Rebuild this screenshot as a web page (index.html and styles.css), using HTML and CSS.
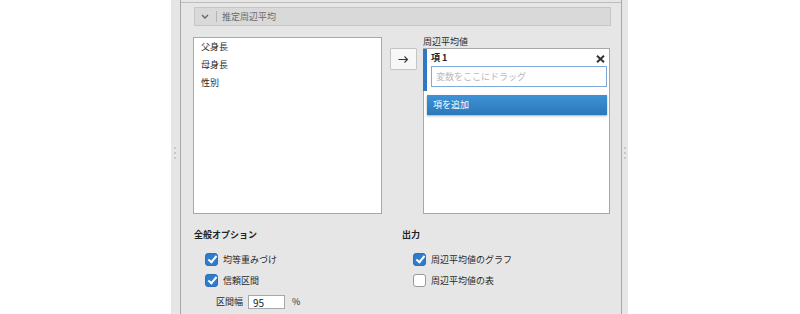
FILE: index.html
```html
<!DOCTYPE html>
<html lang="ja">

<head>
    <meta charset="UTF-8">
    <title>推定周辺平均</title>
    <link rel="stylesheet" href="styles.css">
</head>

<body>
    <div class="stage">
        <div class="grip grip-left"><span></span><span></span><span></span></div>
        <div class="panel">
            <div class="group">
                <div class="group-head">
                    <svg class="chev" width="8" height="5" viewBox="0 0 8 5">
                        <path d="M1 1 L4 4 L7 1" fill="none" stroke="#666" stroke-width="1.4" />
                    </svg>
                    <span class="sep"></span>
                    <span class="group-title">推定周辺平均</span>
                </div>

                <div class="picker">
                    <div class="listbox src">
                        <div class="item">父身長</div>
                        <div class="item">母身長</div>
                        <div class="item">性別</div>
                    </div>
                    <div class="move">
                        <button class="move-btn">
                            <svg width="11" height="7" viewBox="0 0 11 7">
                                <path d="M0.5 3.5 H9.5 M6.5 0.5 L9.5 3.5 L6.5 6.5" fill="none" stroke="#333" stroke-width="1.1" />
                            </svg>
                        </button>
                    </div>
                    <div class="dst-col">
                        <div class="dst-label">周辺平均値</div>
                        <div class="listbox dst">
                            <div class="term">
                                <div class="term-head">
                                    <span class="term-name">項&nbsp;1</span>
                                    <svg class="term-x" width="9" height="8" viewBox="0 0 9 8">
                                        <path d="M1 0.8 L8 7.2 M8 0.8 L1 7.2" stroke="#333" stroke-width="2" />
                                    </svg>
                                </div>
                                <div class="drop">変数をここにドラッグ</div>
                            </div>
                            <div class="add-term">項を追加</div>
                        </div>
                    </div>
                </div>

                <div class="options">
                    <div class="opt-col">
                        <div class="opt-title">全般オプション</div>
                        <div class="opt-row"><span class="box checked"></span>均等重みづけ</div>
                        <div class="opt-row"><span class="box checked"></span>信頼区間</div>
                        <div class="opt-row sub">区間幅<span class="num">95</span>%</div>
                    </div>
                    <div class="opt-col">
                        <div class="opt-title">出力</div>
                        <div class="opt-row"><span class="box checked"></span>周辺平均値のグラフ</div>
                        <div class="opt-row"><span class="box"></span>周辺平均値の表</div>
                    </div>
                </div>
            </div>
        </div>
        <div class="grip grip-right"><span></span><span></span><span></span></div>
    </div>
</body>

</html>
```

FILE: styles.css
```css
body {
    margin: 0;
    padding: 0;
    background-color: #fff;
    font-family: "Noto Sans CJK JP", "Liberation Sans", sans-serif;
    font-size: 9px;
    color: #2a2a2a;
    height: 314px;
    overflow: hidden;
}

.stage {
    display: flex;
    margin-left: 171px;
    width: 457px;
    height: 314px;
    background-color: #e6e6e6;
}

.grip {
    display: flex;
    flex-direction: column;
    justify-content: center;
    gap: 3px;
    padding-bottom: 8px;
}

.grip span {
    width: 2px;
    height: 2px;
    background-color: #c9c9c9;
}

.grip-left {
    width: 9px;
    align-items: center;
    padding-right: 1px;
    box-sizing: border-box;
}

.grip-right {
    width: 6px;
    align-items: center;
}

.panel {
    width: 440px;
    border-left: 1px solid #a9a9a9;
    border-right: 1px solid #a9a9a9;
}

.group {
    margin-top: 2px;
    border-top: 1px solid #bdbdbd;
}

.group-head {
    display: flex;
    align-items: center;
    height: 17px;
    margin: 4px 10px 0 13px;
    background-color: #d9d9d9;
    border: 1px solid #c6c6c6;
    color: #6a6a6a;
}

.chev {
    margin-left: 6px;
}

.sep {
    width: 1px;
    height: 11px;
    background-color: #b5b5b5;
    margin: 0 5px 0 7px;
}

.picker {
    display: grid;
    grid-template-columns: 189px 41px 187px;
    margin: 11px 0 0 12px;
}

.listbox {
    background-color: #fff;
    border: 1px solid #a8a8a8;
    box-sizing: border-box;
}

.src {
    height: 177px;
}

.item {
    height: 18px;
    line-height: 18px;
    padding-left: 7px;
}

.move {
    padding: 11px 0 0 8px;
}

.move-btn {
    width: 27px;
    height: 22px;
    padding: 0;
    background-color: #f7f7f7;
    border: 1px solid #c4c4c4;
    border-radius: 1px;
    display: flex;
    justify-content: center;
    align-items: center;
}

.dst-label {
    height: 11px;
    line-height: 10px;
}

.dst {
    height: 166px;
}

.term {
    border-left: 4px solid #2f78c4;
    margin-left: -1px;
    padding: 0 2px 4px 4px;
}

.term-head {
    display: flex;
    justify-content: space-between;
    align-items: center;
    height: 16px;
    padding-top: 1px;
    box-sizing: border-box;
}

.term-name {
    font-weight: bold;
    color: #222;
}

.term-x {
    margin: 3px 2px 0 0;
}

.drop {
    height: 21px;
    line-height: 19px;
    margin-top: 1px;
    padding-left: 4px;
    border: 1px solid #7ea9d8;
    box-sizing: border-box;
    color: #b9b9b9;
}

.add-term {
    height: 20px;
    line-height: 20px;
    margin: 4px 2px 0 3px;
    padding-left: 6px;
    color: #fff;
    background: linear-gradient(#3d93d5, #2b78bb);
    box-shadow: 0 1px 2px rgba(0, 0, 0, 0.35);
}

.options {
    display: grid;
    grid-template-columns: 208px 1fr;
    margin: 14px 0 0 13px;
}

.opt-title {
    font-weight: bold;
    color: #222;
    line-height: 14px;
    margin-bottom: 7px;
}

.opt-row {
    display: flex;
    align-items: center;
    height: 21px;
    padding-left: 11px;
}

.box {
    width: 13px;
    height: 13px;
    box-sizing: border-box;
    border: 1px solid #9a9a9a;
    border-radius: 3px;
    background-color: #fff;
    margin-right: 5px;
    position: relative;
}

.box.checked {
    background-color: #2f7bcd;
    border-color: #2a6fb9;
}

.box.checked::after {
    content: "";
    position: absolute;
    left: 4px;
    top: 0px;
    width: 3px;
    height: 7px;
    border-right: 2px solid #fff;
    border-bottom: 2px solid #fff;
    transform: rotate(40deg);
}

.opt-row.sub {
    padding-left: 22px;
}

.num {
    width: 37px;
    height: 14px;
    line-height: 14px;
    margin: 0 7px 0 5px;
    padding-left: 4px;
    box-sizing: border-box;
    background-color: #fff;
    border: 1px solid #a8a8a8;
    font-size: 10px;
    color: #222;
}
```
